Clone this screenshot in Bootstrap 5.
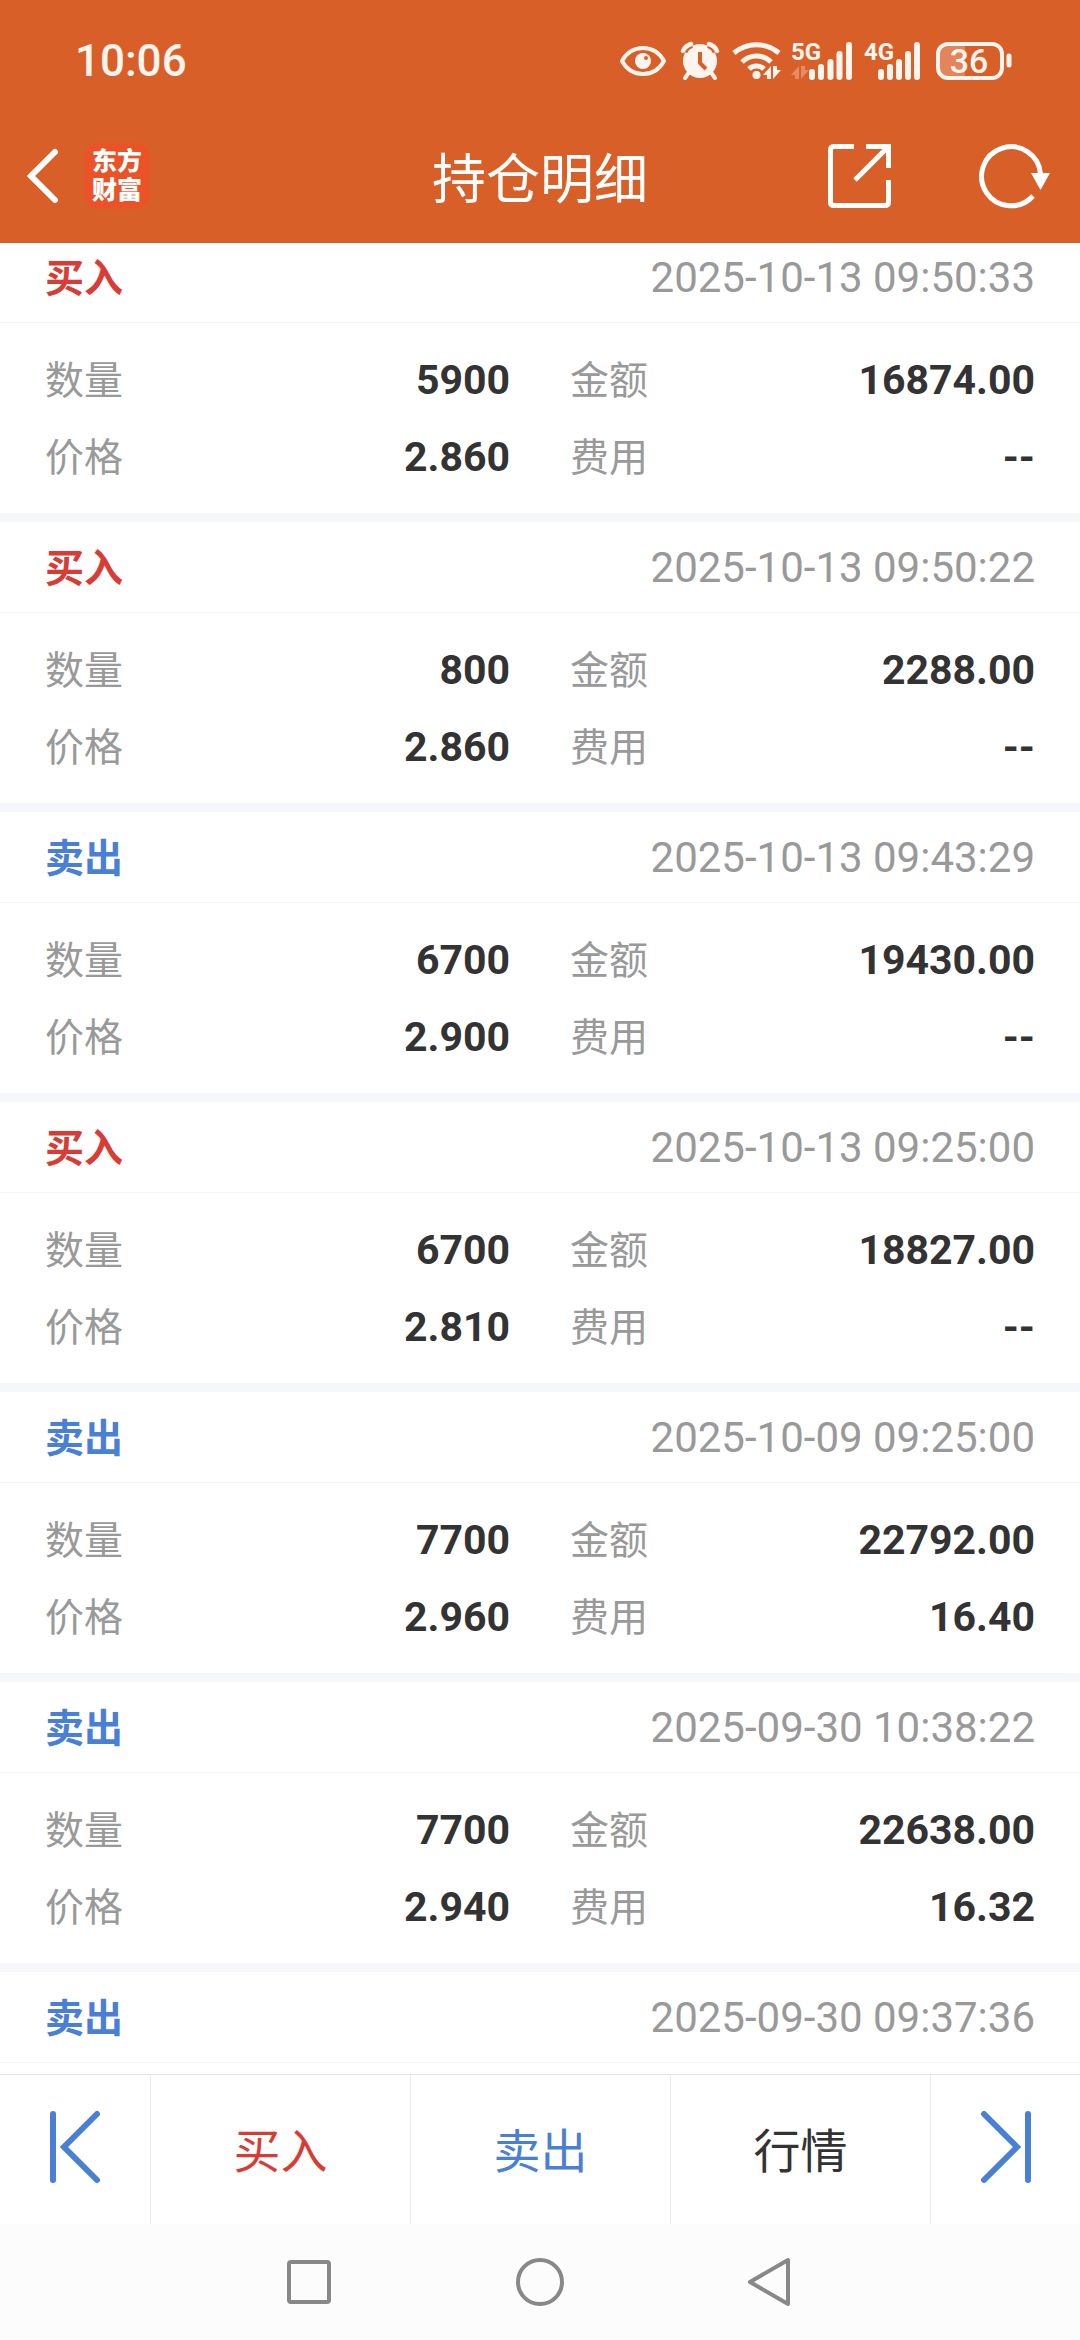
<!DOCTYPE html>
<html lang="zh-CN">
<head>
<meta charset="utf-8">
<meta name="viewport" content="width=device-width, initial-scale=1">
<title>持仓明细</title>
<link href="https://cdn.jsdelivr.net/npm/bootstrap@5.3.0/dist/css/bootstrap.min.css" rel="stylesheet">
<style>
  :root { --brand: #d86028; --buy: #d83c34; --sell: #4a7fd6; --ink: #333; --muted-ink: #999; }
  body { font-family: Roboto, "Noto Sans CJK SC", sans-serif; font-size: 42px; line-height: 1; color: var(--ink); background: #fff; }
  svg { display: block; flex: none; overflow: visible; }
  .zh { font-family: "Noto Sans CJK SC", sans-serif; }
  .plain { background: none; border: 0; padding: 0; color: inherit; text-decoration: none; }

  .app-top { background: var(--brand); padding-bottom: 11px; }
  .status-bar { height: 120px; padding: 2px 69px 0 75px; color: #fff5ee; }
  .clock { font-size: 44px; font-weight: 500; }
  .status-icons { gap: 11px; }
  .net-label { font: 700 24px "Liberation Sans Narrow", Roboto, sans-serif; }
  .title-bar { height: 112px; padding: 0 27px; }
  .side { flex: 1 1 0; }
  .tools { gap: 88px; }
  .page-title { font-size: 54px; line-height: 80px; }
  .app-logo { width: 66px; height: 66px; padding: 2px 8px 6px; border-radius: 15px; background: #ea5228; color: #fff; font-size: 25px; line-height: 29px; font-weight: 900; text-align: center; text-decoration: none; white-space: nowrap; }

  .records { margin-top: -11px; }
  .trade + .trade { border-top: 9px solid #f6f7fa; }
  .trade-head { height: 91px; padding: 0 45px; border-bottom: 1px solid #f5f5f7; }
  .kind { font-size: 39px; font-weight: 700; padding-bottom: 4px; }
  .buy { color: var(--buy); }
  .sell { color: var(--sell); }
  .stamp { color: var(--muted-ink); padding-top: 2px; }
  .trade-body { padding: 18px 45px; column-gap: 60px; display: grid; grid-template-columns: 1fr 1fr; }
  .pair { height: 77px; }
  .pair dt { font-size: 39px; font-weight: 400; color: var(--muted-ink); padding-bottom: 4px; }
  .pair dd { font-size: 41px; font-weight: 700; padding-top: 2px; }

  .actions { height: 150px; border-top: 1px solid #e6e6e8; font-size: 47px; }
  .actions > * { padding: 0 0 5px; }
  .actions > * + * { border-left: 1px solid #ebebed; }
  .act-end { flex: 0 0 150px; color: var(--sell); }
  .act { flex: 1 1 0; }
  .sys-nav { height: 116px; gap: 183px; background: #fcfcfc; color: #888; }
</style>
<script src="https://cdn.jsdelivr.net/npm/bootstrap@5.3.0/dist/js/bootstrap.bundle.min.js"></script>
</head>
<body>
<div class="vh-100 d-flex flex-column overflow-hidden">

  <header class="app-top text-white flex-shrink-0 position-relative">
    <div class="status-bar d-flex align-items-center justify-content-between">
      <span class="clock">10:06</span>
      <div class="status-icons d-flex align-items-center">
        <svg width="50" height="38" viewBox="0 0 50 38" fill="none" stroke="currentColor">
          <path d="M2 19C7 10 15 6 23 6s16 4 21 13c-5 9-13 13-21 13S7 28 2 19Z" stroke-width="4" stroke-linejoin="round"/>
          <circle cx="23" cy="19" r="8" fill="currentColor" stroke="none"/><circle cx="26" cy="16" r="2" fill="#d86028" stroke="none"/>
        </svg>
        <svg width="41" height="38" viewBox="0 0 41 38" fill="currentColor">
          <circle cx="19" cy="19" r="17"/>
          <path d="M3 10Q5 4 11 2.500M35 10Q33 4 27 2.500" fill="none" stroke="#d86028" stroke-width="7"/>
          <path d="M2 9Q4 4 10 2M36 9Q34 4 28 2" fill="none" stroke="currentColor" stroke-width="4.500" stroke-linecap="round"/>
          <path d="M9 29 4 36M29 29l5 7" stroke="currentColor" stroke-width="4" stroke-linecap="round"/>
          <path d="M19 10v11l6 6" fill="none" stroke="#d86028" stroke-width="4"/>
        </svg>
        <svg width="47" height="38" viewBox="0 0 47 38" fill="none" stroke="currentColor" stroke-width="5">
          <path d="M1 11C14 0 33 0 46 11M9 20c8-8 21-8 29 0M16 27c4-4 11-4 15 0"/>
          <circle cx="23.500" cy="33" r="4" fill="currentColor" stroke="none"/>
          <path d="M38 37V24l-8 9h4v4ZM40 24v13l8-9h-4v-4Z" fill="currentColor" stroke="none"/>
        </svg>
        <svg width="62" height="38" viewBox="0 0 62 38" fill="currentColor">
          <text class="net-label" x="0" y="18">5G</text>
          <path d="M8 37V24l-8 9h4v4ZM10 24v13l8-9h-4v-4Z" opacity=".3"/>
          <path d="M21 30v5M30 25v10M39.500 20v15M48.500 12v23M58 3v32" stroke="currentColor" stroke-width="6" stroke-linecap="round"/>
        </svg>
        <svg width="61" height="38" viewBox="0 0 61 38" fill="currentColor">
          <text class="net-label" x="0" y="18">4G</text>
          <path d="M17 30v5M26 25v10M35 20v15M44 12v23M53 3v32" stroke="currentColor" stroke-width="6" stroke-linecap="round"/>
        </svg>
        <svg width="75" height="38" viewBox="0 0 75 38" fill="currentColor">
          <path d="M10 3h19v32H10q-7 0-7-8V11q0-8 7-8Z" opacity=".25"/>
          <rect x="2" y="2" width="64" height="34" rx="10" fill="none" stroke="currentColor" stroke-width="4"/>
          <path d="M73 14v9" stroke="currentColor" stroke-width="5" stroke-linecap="round"/>
          <text x="33" y="31" text-anchor="middle" font-family="Roboto, sans-serif" font-size="34" font-weight="500">36</text>
        </svg>
      </div>
    </div>
    <div class="title-bar d-flex align-items-center zh">
      <div class="side d-flex align-items-center">
        <button type="button" class="plain" aria-label="返回">
          <svg width="33" height="56" viewBox="0 0 33 56" fill="none" stroke="currentColor" stroke-width="6" stroke-linecap="round"><path d="M28 4 4 28l24 24"/></svg>
        </button>
        <a href="#" class="app-logo ms-4">东方<br>财富</a>
      </div>
      <h1 class="page-title fw-normal m-0">持仓明细</h1>
      <div class="side tools d-flex align-items-center justify-content-end">
        <button type="button" class="plain" aria-label="分享">
          <svg width="64" height="64" viewBox="0 0 64 64" fill="none" stroke="currentColor" stroke-width="5"><path d="M26 2.500H6q-3.500 0-3.500 3.500v52q0 3.500 3.500 3.500h51q3.500 0 3.500-3.500V36M38 2.500h22.500V24M60 3 27 36"/></svg>
        </button>
        <button type="button" class="plain" aria-label="刷新">
          <svg width="73" height="64" viewBox="0 0 73 64" fill="none" stroke="currentColor" stroke-width="5"><path d="M53 52A29.500 29.500 0 1 1 60.500 30"/><path d="M51 29h19L60.500 46Z" fill="currentColor" stroke="none"/></svg>
        </button>
      </div>
    </div>
  </header>

  <main class="flex-fill overflow-hidden" style="min-height:0">
    <div class="records">
      <article class="trade">
        <div class="trade-head d-flex align-items-center justify-content-between"><span class="kind buy zh">买入</span><time class="stamp">2025-10-13 09:50:33</time></div>
        <dl class="trade-body m-0">
          <div class="pair d-flex align-items-center justify-content-between"><dt class="zh">数量</dt><dd class="m-0">5900</dd></div>
          <div class="pair d-flex align-items-center justify-content-between"><dt class="zh">金额</dt><dd class="m-0">16874.00</dd></div>
          <div class="pair d-flex align-items-center justify-content-between"><dt class="zh">价格</dt><dd class="m-0">2.860</dd></div>
          <div class="pair d-flex align-items-center justify-content-between"><dt class="zh">费用</dt><dd class="m-0">--</dd></div>
        </dl>
      </article>
      <article class="trade">
        <div class="trade-head d-flex align-items-center justify-content-between"><span class="kind buy zh">买入</span><time class="stamp">2025-10-13 09:50:22</time></div>
        <dl class="trade-body m-0">
          <div class="pair d-flex align-items-center justify-content-between"><dt class="zh">数量</dt><dd class="m-0">800</dd></div>
          <div class="pair d-flex align-items-center justify-content-between"><dt class="zh">金额</dt><dd class="m-0">2288.00</dd></div>
          <div class="pair d-flex align-items-center justify-content-between"><dt class="zh">价格</dt><dd class="m-0">2.860</dd></div>
          <div class="pair d-flex align-items-center justify-content-between"><dt class="zh">费用</dt><dd class="m-0">--</dd></div>
        </dl>
      </article>
      <article class="trade">
        <div class="trade-head d-flex align-items-center justify-content-between"><span class="kind sell zh">卖出</span><time class="stamp">2025-10-13 09:43:29</time></div>
        <dl class="trade-body m-0">
          <div class="pair d-flex align-items-center justify-content-between"><dt class="zh">数量</dt><dd class="m-0">6700</dd></div>
          <div class="pair d-flex align-items-center justify-content-between"><dt class="zh">金额</dt><dd class="m-0">19430.00</dd></div>
          <div class="pair d-flex align-items-center justify-content-between"><dt class="zh">价格</dt><dd class="m-0">2.900</dd></div>
          <div class="pair d-flex align-items-center justify-content-between"><dt class="zh">费用</dt><dd class="m-0">--</dd></div>
        </dl>
      </article>
      <article class="trade">
        <div class="trade-head d-flex align-items-center justify-content-between"><span class="kind buy zh">买入</span><time class="stamp">2025-10-13 09:25:00</time></div>
        <dl class="trade-body m-0">
          <div class="pair d-flex align-items-center justify-content-between"><dt class="zh">数量</dt><dd class="m-0">6700</dd></div>
          <div class="pair d-flex align-items-center justify-content-between"><dt class="zh">金额</dt><dd class="m-0">18827.00</dd></div>
          <div class="pair d-flex align-items-center justify-content-between"><dt class="zh">价格</dt><dd class="m-0">2.810</dd></div>
          <div class="pair d-flex align-items-center justify-content-between"><dt class="zh">费用</dt><dd class="m-0">--</dd></div>
        </dl>
      </article>
      <article class="trade">
        <div class="trade-head d-flex align-items-center justify-content-between"><span class="kind sell zh">卖出</span><time class="stamp">2025-10-09 09:25:00</time></div>
        <dl class="trade-body m-0">
          <div class="pair d-flex align-items-center justify-content-between"><dt class="zh">数量</dt><dd class="m-0">7700</dd></div>
          <div class="pair d-flex align-items-center justify-content-between"><dt class="zh">金额</dt><dd class="m-0">22792.00</dd></div>
          <div class="pair d-flex align-items-center justify-content-between"><dt class="zh">价格</dt><dd class="m-0">2.960</dd></div>
          <div class="pair d-flex align-items-center justify-content-between"><dt class="zh">费用</dt><dd class="m-0">16.40</dd></div>
        </dl>
      </article>
      <article class="trade">
        <div class="trade-head d-flex align-items-center justify-content-between"><span class="kind sell zh">卖出</span><time class="stamp">2025-09-30 10:38:22</time></div>
        <dl class="trade-body m-0">
          <div class="pair d-flex align-items-center justify-content-between"><dt class="zh">数量</dt><dd class="m-0">7700</dd></div>
          <div class="pair d-flex align-items-center justify-content-between"><dt class="zh">金额</dt><dd class="m-0">22638.00</dd></div>
          <div class="pair d-flex align-items-center justify-content-between"><dt class="zh">价格</dt><dd class="m-0">2.940</dd></div>
          <div class="pair d-flex align-items-center justify-content-between"><dt class="zh">费用</dt><dd class="m-0">16.32</dd></div>
        </dl>
      </article>
      <article class="trade">
        <div class="trade-head d-flex align-items-center justify-content-between"><span class="kind sell zh">卖出</span><time class="stamp">2025-09-30 09:37:36</time></div>
      </article>
    </div>
  </main>

  <div class="actions d-flex flex-shrink-0 zh">
    <div class="act-end d-flex"><button type="button" class="plain w-100 d-flex align-items-center justify-content-center" aria-label="上一只">
      <svg width="50" height="72" viewBox="0 0 50 72" fill="none" stroke="currentColor" stroke-width="6" stroke-linecap="round"><path d="M3 3v66M47 3 14 36l33 33"/></svg>
    </button></div>
    <a href="#" class="act buy text-decoration-none d-flex align-items-center justify-content-center">买入</a>
    <a href="#" class="act sell text-decoration-none d-flex align-items-center justify-content-center">卖出</a>
    <a href="#" class="act text-reset text-decoration-none d-flex align-items-center justify-content-center">行情</a>
    <div class="act-end d-flex"><button type="button" class="plain w-100 d-flex align-items-center justify-content-center" aria-label="下一只">
      <svg width="50" height="72" viewBox="0 0 50 72" fill="none" stroke="currentColor" stroke-width="6" stroke-linecap="round"><path d="M47 3v66M3 3l33 33L3 69"/></svg>
    </button></div>
  </div>

  <nav class="sys-nav d-flex flex-shrink-0 align-items-center justify-content-center" aria-label="系统导航">
    <button type="button" class="plain" aria-label="最近任务"><svg width="48" height="48" viewBox="0 0 48 48" fill="none" stroke="currentColor" stroke-width="4"><rect x="4" y="4" width="40" height="40" rx="2"/></svg></button>
    <button type="button" class="plain" aria-label="主屏幕"><svg width="48" height="48" viewBox="0 0 48 48" fill="none" stroke="currentColor" stroke-width="4"><circle cx="24" cy="24" r="22"/></svg></button>
    <button type="button" class="plain" aria-label="后退"><svg width="48" height="48" viewBox="0 0 48 48" fill="none" stroke="currentColor" stroke-width="4" stroke-linejoin="round"><path d="M41 2v44L3 24Z"/></svg></button>
  </nav>
</div>
</body>
</html>
